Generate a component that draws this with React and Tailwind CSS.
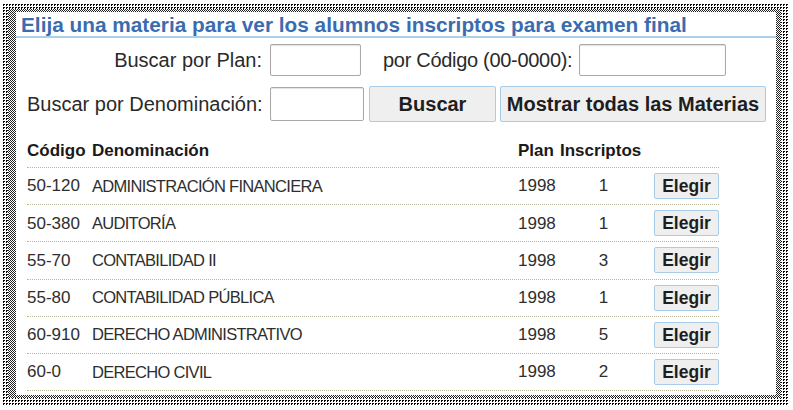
import React, { useState } from 'react';

const materias = [
  { codigo: '50-120', nombre: 'ADMINISTRACIÓN FINANCIERA', plan: '1998', inscriptos: 1 },
  { codigo: '50-380', nombre: 'AUDITORÍA', plan: '1998', inscriptos: 1 },
  { codigo: '55-70', nombre: 'CONTABILIDAD II', plan: '1998', inscriptos: 3 },
  { codigo: '55-80', nombre: 'CONTABILIDAD PÚBLICA', plan: '1998', inscriptos: 1 },
  { codigo: '60-910', nombre: 'DERECHO ADMINISTRATIVO', plan: '1998', inscriptos: 5 },
  { codigo: '60-0', nombre: 'DERECHO CIVIL', plan: '1998', inscriptos: 2 },
];

const inputCls =
  'shrink-0 border border-[#a9a9a9] rounded-[2px] bg-white shadow-[inset_0_1px_1px_rgba(0,0,0,0.12)] outline-none px-1';
const btnCls =
  'shrink-0 border border-[#a8cbe8] rounded-[2px] bg-[#efefef] font-bold text-[#1e1e1e] flex items-center justify-center whitespace-nowrap';

function App() {
  const [filtro, setFiltro] = useState({ plan: '', codigo: '', denominacion: '' });

  return (
    <div className="w-[793px] h-[410px] bg-white pt-[4px] pl-[2px] font-['Liberation_Sans',Arial,sans-serif]">
      {/* sombra punteada */}
      <div className="w-[786px] h-[401px] pl-[6px] pt-[5px] pr-[7px] pb-[7px] bg-[conic-gradient(#000_0_25%,transparent_0)] bg-[length:3px_3px]">
        <div className="w-full h-full pl-[8px] pt-[3px] pr-[5px] pb-[3px] bg-[repeating-conic-gradient(#222_0_25%,#fff_0_50%)] bg-[length:2px_2px]">
          <div className="w-full h-full bg-white flex flex-col">
            <div className="h-[26px] border-b-2 border-[#a9d0ec] pl-[5px] text-[20.8px] leading-[26px] font-bold text-[#3b6cb0] whitespace-nowrap">
              Elija una materia para ver los alumnos inscriptos para examen final
            </div>

            <div className="flex items-center mt-[6px] pl-[11px] text-[20px] text-[#2a2a2a] whitespace-nowrap">
              <span className="shrink-0 w-[235px] text-right">Buscar por Plan:</span>
              <input
                className={inputCls + ' ml-[8px] w-[91px] h-[32px]'}
                value={filtro.plan}
                onChange={(e) => setFiltro({ ...filtro, plan: e.target.value })}
              />
              <span className="shrink-0 ml-[22px] tracking-[-0.3px]">por Código (00-0000):</span>
              <input
                className={inputCls + ' ml-[7px] w-[147px] h-[32px]'}
                value={filtro.codigo}
                onChange={(e) => setFiltro({ ...filtro, codigo: e.target.value })}
              />
            </div>

            <div className="flex items-center mt-[10px] pl-[11px] text-[20px] text-[#2a2a2a] whitespace-nowrap">
              <span className="shrink-0 w-[235px] text-right">Buscar por Denominación:</span>
              <input
                className={inputCls + ' ml-[8px] w-[94px] h-[34px]'}
                value={filtro.denominacion}
                onChange={(e) => setFiltro({ ...filtro, denominacion: e.target.value })}
              />
              <button className={btnCls + ' ml-[5px] w-[127px] h-[36px] text-[20px]'}>Buscar</button>
              <button className={btnCls + ' ml-[4px] w-[266px] h-[36px] text-[20px]'}>Mostrar todas las Materias</button>
            </div>

            <div className="ml-[11px] mt-[13px] w-[692px] text-[#2e2e2e]">
              <div className="grid grid-cols-[65px_426px_42px_87px_72px] items-center h-[33px] border-b border-dotted border-[#b9b99a] text-[17px] font-bold text-[#1a1a1a] whitespace-nowrap">
                <span>Código</span>
                <span>Denominación</span>
                <span>Plan</span>
                <span className="col-span-2">Inscriptos</span>
              </div>
              {materias.map((m) => (
                <div
                  key={m.codigo}
                  className="grid grid-cols-[65px_426px_42px_87px_72px] items-center h-[37.2px] border-b border-dotted border-[#b9b99a] whitespace-nowrap"
                >
                  <span className="text-[17px]">{m.codigo}</span>
                  <span className="text-[16.5px] tracking-[-0.7px]">{m.nombre}</span>
                  <span className="text-[17px]">{m.plan}</span>
                  <span className="text-[17px] text-center">{m.inscriptos}</span>
                  <div className="flex justify-end">
                    <button className={btnCls + ' w-[65px] h-[26px] text-[17.5px]'}>Elegir</button>
                  </div>
                </div>
              ))}
            </div>
          </div>
        </div>
      </div>
    </div>
  );
}

export default App;
